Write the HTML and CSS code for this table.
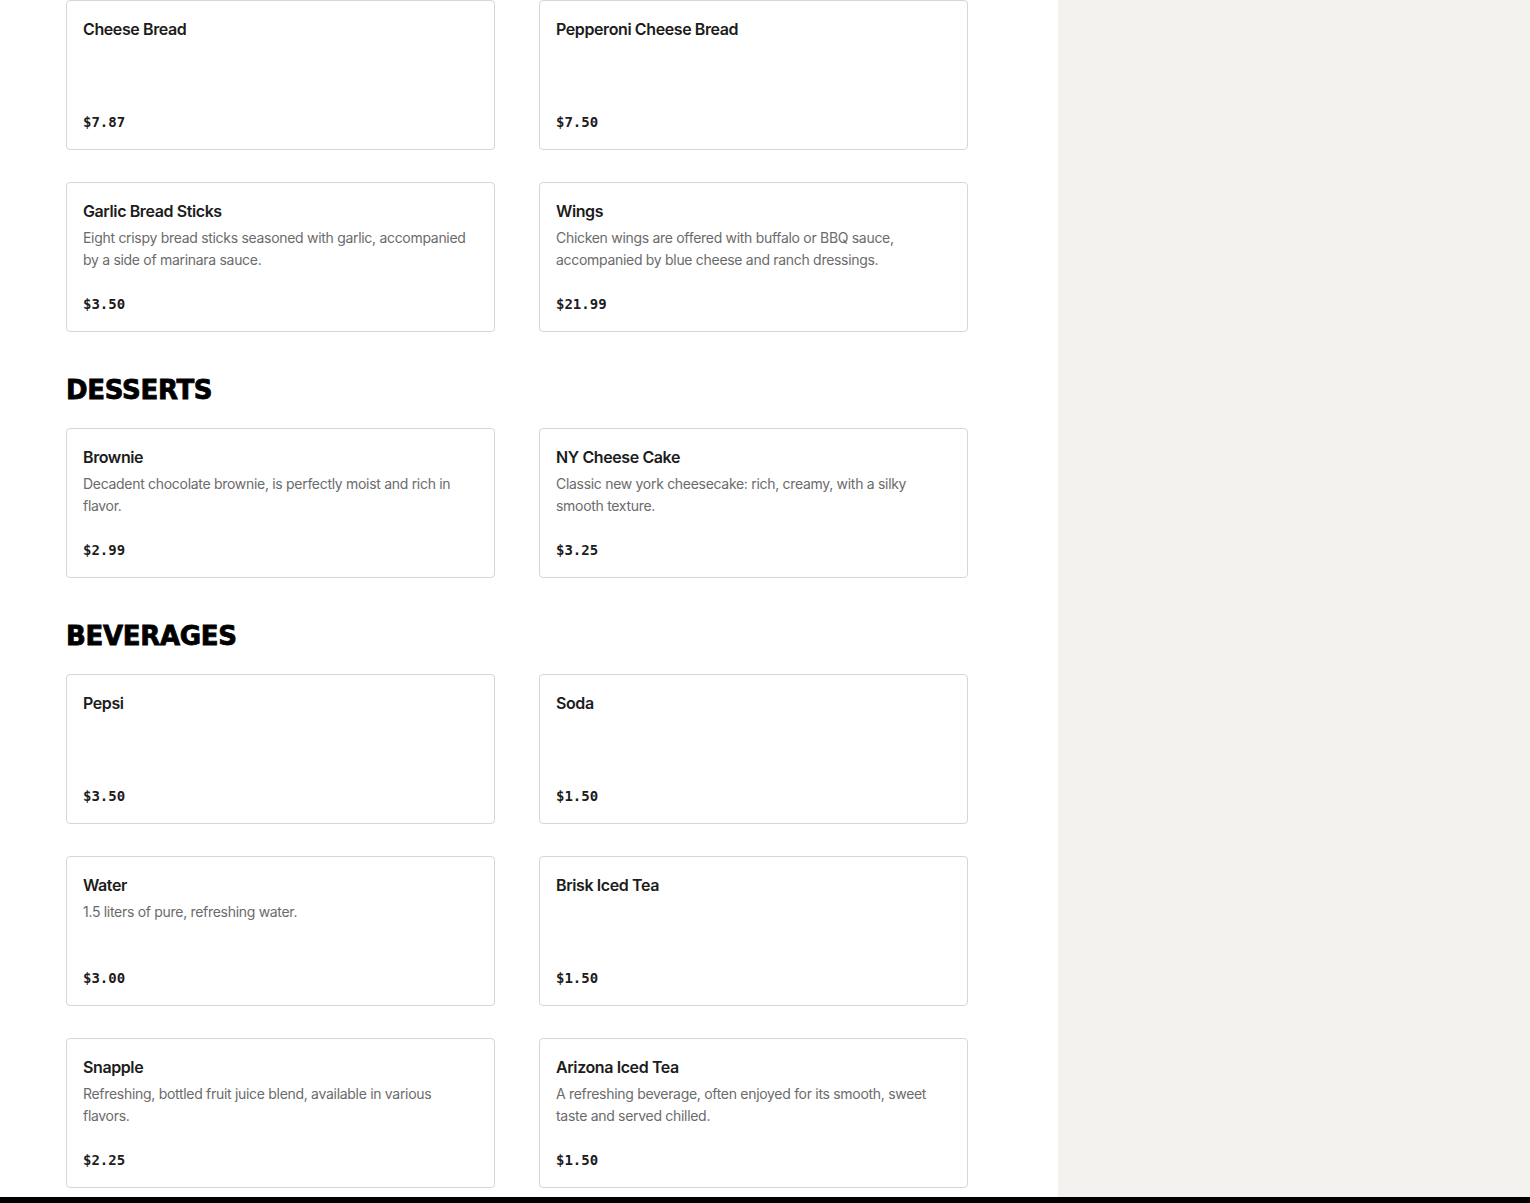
FILE: index.html
```html
<!DOCTYPE html>
<html lang="en">
<head>
<meta charset="utf-8">
<title>Menu</title>
<link rel="stylesheet" href="styles.css">
</head>
<body>
<div class="page">
  <main class="menu">
    <section class="section">
      <div class="grid">
        <div class="card"><div class="name">Cheese Bread</div><div class="price">$7.87</div></div>
        <div class="card"><div class="name">Pepperoni Cheese Bread</div><div class="price">$7.50</div></div>
        <div class="card"><div class="name">Garlic Bread Sticks</div><p class="desc">Eight crispy bread sticks seasoned with garlic, accompanied by a side of marinara sauce.</p><div class="price">$3.50</div></div>
        <div class="card"><div class="name">Wings</div><p class="desc">Chicken wings are offered with buffalo or BBQ sauce, accompanied by blue cheese and ranch dressings.</p><div class="price">$21.99</div></div>
      </div>
    </section>
    <section class="section">
      <h2 class="heading">DESSERTS</h2>
      <div class="grid">
        <div class="card"><div class="name">Brownie</div><p class="desc">Decadent chocolate brownie, is perfectly moist and rich in flavor.</p><div class="price">$2.99</div></div>
        <div class="card"><div class="name">NY Cheese Cake</div><p class="desc">Classic new york cheesecake: rich, creamy, with a silky smooth texture.</p><div class="price">$3.25</div></div>
      </div>
    </section>
    <section class="section">
      <h2 class="heading">BEVERAGES</h2>
      <div class="grid">
        <div class="card"><div class="name">Pepsi</div><div class="price">$3.50</div></div>
        <div class="card"><div class="name">Soda</div><div class="price">$1.50</div></div>
        <div class="card"><div class="name">Water</div><p class="desc">1.5 liters of pure, refreshing water.</p><div class="price">$3.00</div></div>
        <div class="card"><div class="name">Brisk Iced Tea</div><div class="price">$1.50</div></div>
        <div class="card"><div class="name">Snapple</div><p class="desc">Refreshing, bottled fruit juice blend, available in various flavors.</p><div class="price">$2.25</div></div>
        <div class="card"><div class="name">Arizona Iced Tea</div><p class="desc">A refreshing beverage, often enjoyed for its smooth, sweet taste and served chilled.</p><div class="price">$1.50</div></div>
      </div>
    </section>
  </main>
  <aside class="side"></aside>
</div>
<div class="footer-bar"></div>
</body>
</html>
```
FILE: styles.css
```css
* { box-sizing: border-box; }
html, body { margin: 0; padding: 0; background: #ffffff; }
body { font-family: "Inter", "Liberation Sans", sans-serif; color: #191919; }
.page { display: flex; height: 1197px; }
.menu { width: 1058px; flex: none; padding: 0 90px 0 66px; }
.side { flex: 1; background: #f3f2ef; }
.section + .section { margin-top: 40px; }
.heading {
  margin: 0 0 20px;
  font-family: "DejaVu Sans", sans-serif;
  font-weight: 700;
  font-size: 26px;
  line-height: 34px;
  letter-spacing: -0.3px;
  color: #000;
  -webkit-text-stroke: 0.8px #000;
  padding-top: 1px;
  height: 36px;
}
.grid { display: grid; grid-template-columns: 429px 429px; column-gap: 44px; row-gap: 32px; }
.card {
  height: 150px;
  border: 1px solid #d6d6d6;
  border-radius: 4px;
  padding: 16px 16px 15px;
  display: flex;
  flex-direction: column;
  background: #fff;
}
.name { font-size: 16px; line-height: 24px; font-weight: 600; letter-spacing: -0.4px; color: #1c1c1c; }
.desc { margin: 4px 0 0; font-size: 14px; line-height: 22px; letter-spacing: -0.3px; color: #6b6b6b; }
.price {
  margin-top: auto;
  font-family: "DejaVu Sans Mono", "Liberation Mono", monospace;
  font-weight: 700;
  font-size: 14px;
  line-height: 24px;
  color: #1c1c1c;
}
.footer-bar { height: 6px; background: #000; }
```
